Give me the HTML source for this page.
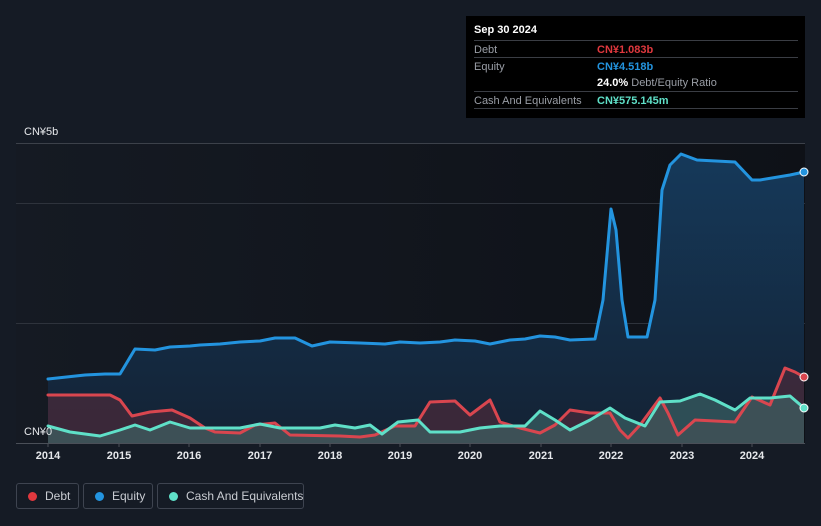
<!DOCTYPE html>
<html><head><meta charset="utf-8"><style>
html,body{margin:0;padding:0;width:821px;height:526px;background:#151b25;overflow:hidden;font-family:"Liberation Sans",sans-serif}
.tt{position:absolute;left:466px;top:16px;width:339px;height:102px;background:#000;}
.tt .h{position:absolute;left:8px;top:8px;color:#fff;font-size:11px;font-weight:bold}
.row{position:absolute;left:8px;width:324px;height:17px;border-top:1px solid #3a3d44;font-size:11px;color:#9a9ea6}
.row span{position:absolute;left:123px;top:3px;font-weight:bold;white-space:nowrap}
.row b{position:absolute;left:0;top:3px;font-weight:normal;white-space:nowrap}
.lg{position:absolute;top:483px;height:26px;border:1px solid #3e4450;border-radius:3px;box-sizing:border-box;color:#c9ccd2;font-size:12px;line-height:24px;white-space:nowrap}
.lg i{position:absolute;left:11px;top:8px;width:9px;height:9px;border-radius:50%}
.lg span{position:absolute;left:28px;white-space:nowrap}
.ax{position:absolute;top:450px;color:#e6e8eb;font-size:11px;font-weight:bold;width:40px;text-align:center}
</style></head><body>
<svg width="821" height="526" style="position:absolute;left:0;top:0">
<defs>
<linearGradient id="pb" x1="0" x2="1" y1="0" y2="0"><stop offset="0" stop-color="#151a23"/><stop offset="1" stop-color="#0e1117"/></linearGradient>
<linearGradient id="eq" x1="0" x2="0" y1="0" y2="1"><stop offset="0" stop-color="#15395a"/><stop offset="1" stop-color="#142234"/></linearGradient>
</defs>
<rect x="16" y="143" width="789" height="300" fill="url(#pb)"/>
<g stroke="#2e333c" stroke-width="1">
<line x1="16" y1="143.5" x2="805" y2="143.5" stroke="#3c414a"/>
<line x1="16" y1="203.5" x2="805" y2="203.5"/>
<line x1="16" y1="323.5" x2="805" y2="323.5"/>
</g>
<polygon fill="url(#eq)" points="48,443 48,379 85,375 105,374 120,374 135,349 155,350 170,347 190,346 200,345 220,344 240,342 260,341 275,338 295,338 312,346 330,342 360,343 385,344 400,342 420,343 440,342 455,340 475,341 490,344 510,340 525,339 540,336 555,337 570,340 595,339 603,300 611,209 616,230 622,300 628,337 647,337 655,300 662,190 670,165 681,154 697,160 735,162 752,180 760,180 790,175 804,172 804,443"/>
<polygon fill="#4a2b3a" fill-opacity="0.7" points="48,443 48,395 110,395 120,400 132,416 150,412 172,410 190,418 205,428 215,432 240,433 255,425 275,423 290,435 340,436 360,437 375,435 395,426 415,426 430,402 455,401 470,415 490,400 500,422 520,428 540,433 555,425 570,410 590,413 610,413 620,430 628,438 640,425 660,398 668,413 678,435 695,420 735,422 752,397 770,405 785,368 795,372 804,377 804,443"/>
<polygon fill="#3f6a6a" fill-opacity="0.6" points="48,443 48,426 70,432 100,436 120,430 135,425 150,430 170,422 190,428 240,428 260,424 280,428 320,428 335,425 355,428 370,425 382,434 398,422 418,420 430,432 460,432 480,428 500,426 525,426 540,411 555,420 570,430 590,420 610,408 625,418 645,426 660,402 680,401 700,394 715,400 735,410 750,398 770,398 790,396 804,408 804,443"/>
<g fill="none" stroke-width="3" stroke-linejoin="round" stroke-linecap="round">
<polyline stroke="#2394df" points="48,379 85,375 105,374 120,374 135,349 155,350 170,347 190,346 200,345 220,344 240,342 260,341 275,338 295,338 312,346 330,342 360,343 385,344 400,342 420,343 440,342 455,340 475,341 490,344 510,340 525,339 540,336 555,337 570,340 595,339 603,300 611,209 616,230 622,300 628,337 647,337 655,300 662,190 670,165 681,154 697,160 735,162 752,180 760,180 790,175 804,172"/>
<polyline stroke="#d9464f" points="48,395 110,395 120,400 132,416 150,412 172,410 190,418 205,428 215,432 240,433 255,425 275,423 290,435 340,436 360,437 375,435 395,426 415,426 430,402 455,401 470,415 490,400 500,422 520,428 540,433 555,425 570,410 590,413 610,413 620,430 628,438 640,425 660,398 668,413 678,435 695,420 735,422 752,397 770,405 785,368 795,372 804,377"/>
<polyline stroke="#5fe0c8" points="48,426 70,432 100,436 120,430 135,425 150,430 170,422 190,428 240,428 260,424 280,428 320,428 335,425 355,428 370,425 382,434 398,422 418,420 430,432 460,432 480,428 500,426 525,426 540,411 555,420 570,430 590,420 610,408 625,418 645,426 660,402 680,401 700,394 715,400 735,410 750,398 770,398 790,396 804,408"/>
</g>
<circle cx="804" cy="172" r="4" fill="#2394df" stroke="#fff" stroke-width="1"/>
<circle cx="804" cy="377" r="4" fill="#d9464f" stroke="#fff" stroke-width="1"/>
<circle cx="804" cy="408" r="4" fill="#5fe0c8" stroke="#fff" stroke-width="1"/>
<line x1="16" y1="443.5" x2="805" y2="443.5" stroke="#4a4f58"/>
<g stroke="#4a4f58"><line x1="48" y1="443" x2="48" y2="447"/><line x1="119" y1="443" x2="119" y2="447"/><line x1="189" y1="443" x2="189" y2="447"/><line x1="260" y1="443" x2="260" y2="447"/><line x1="330" y1="443" x2="330" y2="447"/><line x1="400" y1="443" x2="400" y2="447"/><line x1="470" y1="443" x2="470" y2="447"/><line x1="541" y1="443" x2="541" y2="447"/><line x1="611" y1="443" x2="611" y2="447"/><line x1="682" y1="443" x2="682" y2="447"/><line x1="752" y1="443" x2="752" y2="447"/></g>
<text x="24" y="135" fill="#e6e8eb" font-size="11" font-family="Liberation Sans">CN¥5b</text>
<text x="24" y="435" fill="#e6e8eb" font-size="11" font-family="Liberation Sans">CN¥0</text>
</svg>
<div class="ax" style="left:28px">2014</div><div class="ax" style="left:99px">2015</div><div class="ax" style="left:169px">2016</div><div class="ax" style="left:240px">2017</div><div class="ax" style="left:310px">2018</div><div class="ax" style="left:380px">2019</div><div class="ax" style="left:450px">2020</div><div class="ax" style="left:521px">2021</div><div class="ax" style="left:591px">2022</div><div class="ax" style="left:662px">2023</div><div class="ax" style="left:732px">2024</div>
<div class="tt">
<div class="h">Sep 30 2024</div>
<div class="row" style="top:24px"><b>Debt</b><span style="color:#e0383e">CN¥1.083b</span></div>
<div class="row" style="top:41px"><b>Equity</b><span style="color:#2394df">CN¥4.518b</span></div>
<div class="row" style="top:58px;border-top:none"><span style="color:#fff">24.0% <b style="position:static;color:#9a9ea6">Debt/Equity Ratio</b></span></div>
<div class="row" style="top:75px"><b>Cash And Equivalents</b><span style="color:#5fe0c8">CN¥575.145m</span></div>
<div class="row" style="top:92px;height:0"></div>
</div>
<div class="lg" style="left:16px;width:63px"><i style="background:#e0383e"></i><span>Debt</span></div>
<div class="lg" style="left:83px;width:70px"><i style="background:#2394df"></i><span>Equity</span></div>
<div class="lg" style="left:157px;width:147px"><i style="background:#5fe0c8"></i><span>Cash And Equivalents</span></div>
</body></html>
